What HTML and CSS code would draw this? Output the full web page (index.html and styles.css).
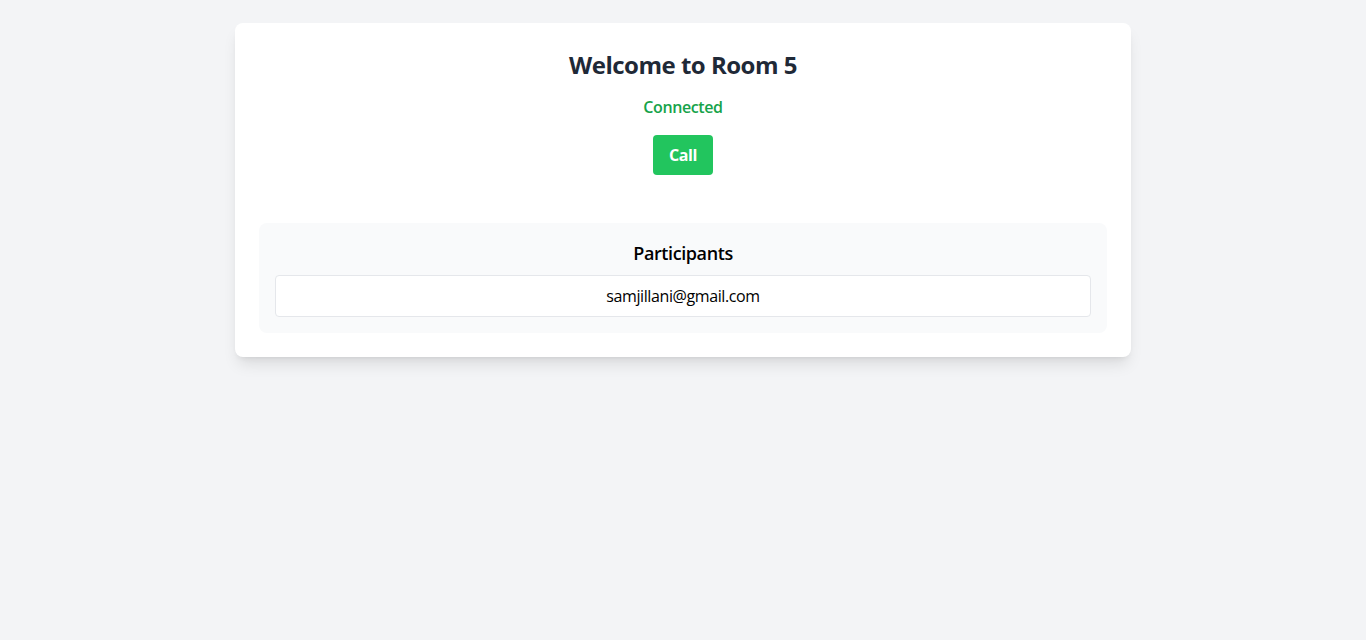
FILE: index.html
```html
<!DOCTYPE html>
<html>
<head>
<meta charset="utf-8">
<link rel="stylesheet" href="styles.css">
</head>
<body>
<div class="card">
  <h1 class="title">Welcome to Room 5</h1>
  <p class="status">Connected</p>
  <div class="actions"><button class="call-btn">Call</button></div>
  <section class="participants">
    <h2 class="participants-title">Participants</h2>
    <ul class="participant-list">
      <li class="participant">samjillani@gmail.com</li>
    </ul>
  </section>
</div>
</body>
</html>
```

FILE: styles.css
```css
* { box-sizing: border-box; }
html, body { margin: 0; padding: 0; }
body {
  background: #f3f4f6;
  font-family: "Open Sans", "Noto Sans", "Liberation Sans", sans-serif;
  color: #111827;
  min-height: 640px;
  padding-top: 23px;
  letter-spacing: -0.4px;
}
.card {
  width: 896px;
  margin: 0 auto;
  background: #fff;
  border-radius: 8px;
  padding: 24px;
  box-shadow: 0 10px 15px -3px rgba(0,0,0,0.1), 0 4px 6px -4px rgba(0,0,0,0.1);
  display: flex;
  flex-direction: column;
  align-items: center;
}
.title {
  margin: 0 0 16px;
  padding-top: 2px;
  height: 32px;
  font-size: 24px;
  line-height: 32px;
  font-weight: 700;
  color: #1f2937;
  letter-spacing: -0.5px;
}
.status {
  margin: 0 0 16px;
  font-size: 16px;
  line-height: 24px;
  font-weight: 600;
  color: #16a34a;
}
.actions { margin-bottom: 48px; }
.call-btn {
  background: #22c55e;
  color: #fff;
  border: 0;
  border-radius: 4px;
  height: 40px;
  width: 60px;
  padding: 0;
  font-family: inherit;
  letter-spacing: inherit;
  font-size: 16px;
  font-weight: 700;
  cursor: pointer;
}
.participants {
  align-self: stretch;
  background: #f9fafb;
  border-radius: 8px;
  padding: 16px;
}
.participants-title {
  margin: 0 0 8px;
  text-align: center;
  font-size: 18px;
  line-height: 28px;
  font-weight: 600;
  color: #000;
}
.participant-list { list-style: none; margin: 0; padding: 0; }
.participant {
  background: #fff;
  border: 1px solid #e5e7eb;
  border-radius: 4px;
  padding: 8px;
  text-align: center;
  font-size: 16px;
  line-height: 24px;
  color: #000;
}
```
